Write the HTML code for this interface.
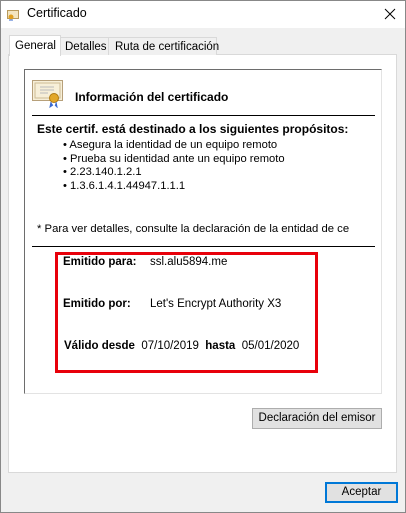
<!DOCTYPE html>
<html><head><meta charset="utf-8"><style>
*{margin:0;padding:0;box-sizing:border-box}
body{width:406px;height:513px;background:#f0f0f0;font-family:"Liberation Sans",sans-serif;font-size:11.5px;color:#000;position:relative;overflow:hidden}
.a{position:absolute;white-space:nowrap}
</style></head><body>
<div class="a" style="left:0;top:0;width:406px;height:513px;border:1px solid #888"></div>
<div class="a" style="left:1px;top:1px;width:404px;height:27px;background:#fff"></div>
<svg class="a" style="left:7px;top:9px" width="12" height="12"><rect x="0.5" y="1.5" width="11" height="8" fill="#f3e5c0" stroke="#b89a5c"/><circle cx="4" cy="8" r="2.5" fill="#e0a020"/><path d="M3 10v2M5 10v2" stroke="#36c"/></svg>
<div class="a" style="left:27px;top:6px;font-size:12.5px">Certificado</div>
<svg class="a" style="left:384px;top:8px" width="12" height="12"><path d="M1 1L11 11M11 1L1 11" stroke="#000" stroke-width="1"/></svg>
<div class="a" style="left:8px;top:54px;width:389px;height:419px;background:#fff;border:1px solid #d9d9d9"></div>
<div class="a" style="left:9px;top:35px;width:52px;height:21px;background:#fff;border:1px solid #d9d9d9;border-bottom:none;padding:4px 0 0 5px;font-size:11.5px">General</div>
<div class="a" style="left:60px;top:37px;width:49px;height:18px;background:#f0f0f0;border:1px solid #d9d9d9;border-bottom:none;padding:3px 0 0 4px;font-size:11.5px">Detalles</div>
<div class="a" style="left:108px;top:37px;width:109px;height:18px;background:#f0f0f0;border:1px solid #d9d9d9;border-bottom:none;padding:3px 0 0 6px;font-size:11.5px">Ruta de certificación</div>
<div class="a" style="left:24px;top:69px;width:358px;height:325px;background:#fff;border-left:1px solid #6d6d6d;border-top:1px solid #6d6d6d;border-right:1px solid #e3e3e3;border-bottom:1px solid #e3e3e3"></div>
<svg class="a" style="left:32px;top:80px" width="32" height="28"><rect x="0.5" y="0.5" width="30" height="20" fill="#f7efd8" stroke="#b7a07a"/><rect x="3" y="3" width="25" height="15" fill="none" stroke="#cdbb95"/><path d="M8 7h14M8 10h14M8 13h8" stroke="#bbb"/><circle cx="22" cy="18" r="4.5" fill="#e2a72a" stroke="#b07a10"/><path d="M19 22l-1 5 3-2M24 22l1 5-2-2" fill="#3a6ad0" stroke="#3a6ad0"/></svg>
<div class="a" style="left:75px;top:90px;font-weight:bold;font-size:12px">Información del certificado</div>
<div class="a" style="left:32px;top:115px;width:343px;height:1px;background:#000"></div>
<div class="a" style="left:37px;top:122px;font-weight:bold;font-size:12px">Este certif. está destinado a los siguientes propósitos:</div>
<div class="a" style="left:63px;top:139px;line-height:13.5px;font-size:11.2px">• Asegura la identidad de un equipo remoto<br>• Prueba su identidad ante un equipo remoto<br>• 2.23.140.1.2.1<br>• 1.3.6.1.4.1.44947.1.1.1</div>
<div class="a" style="left:37px;top:223px;font-size:11.3px">* Para ver detalles, consulte la declaración de la entidad de ce</div>
<div class="a" style="left:32px;top:246px;width:343px;height:1px;background:#000"></div>
<div class="a" style="left:55px;top:252px;width:263px;height:121px;border:3px solid #e8000a"></div>
<div class="a" style="left:63px;top:256px;font-weight:bold">Emitido para:</div>
<div class="a" style="left:150px;top:256px">ssl.alu5894.me</div>
<div class="a" style="left:63px;top:298px;font-weight:bold">Emitido por:</div>
<div class="a" style="left:150px;top:298px">Let's Encrypt Authority X3</div>
<div class="a" style="left:64px;top:340px"><b>Válido desde</b>&nbsp; 07/10/2019&nbsp; <b>hasta</b>&nbsp; 05/01/2020</div>
<div class="a" style="left:252px;top:408px;width:130px;height:21px;background:#e1e1e1;border:1px solid #adadad;text-align:center;line-height:19px">Declaración del emisor</div>
<div class="a" style="left:325px;top:482px;width:73px;height:21px;background:#e1e1e1;border:2px solid #0078d7;text-align:center;line-height:17px">Aceptar</div>
</body></html>
